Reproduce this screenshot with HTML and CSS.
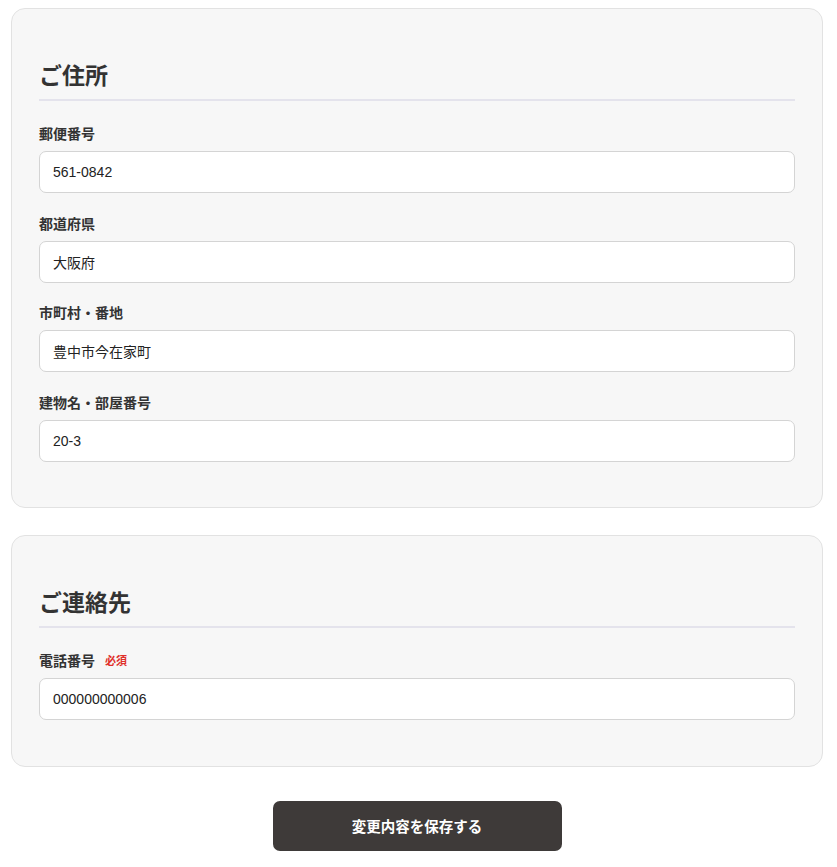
FILE: index.html
```html
<!DOCTYPE html>
<html lang="ja">
<head>
  <meta charset="UTF-8" />
  <meta name="viewport" content="width=device-width, initial-scale=1.0"/>
  <title>会員情報の変更</title>
  <link rel="stylesheet" href="styles.css">
</head>
<body>
  <form class="page" onsubmit="return false;">
    <section class="card">
      <h2>ご住所</h2>
      <div class="field">
        <label for="zip">郵便番号</label>
        <input type="text" id="zip" value="561-0842" />
      </div>
      <div class="field">
        <label for="pref">都道府県</label>
        <input type="text" id="pref" value="大阪府" />
      </div>
      <div class="field">
        <label for="city">市町村・番地</label>
        <input type="text" id="city" value="豊中市今在家町" />
      </div>
      <div class="field">
        <label for="building">建物名・部屋番号</label>
        <input type="text" id="building" value="20-3" />
      </div>
    </section>

    <section class="card">
      <h2>ご連絡先</h2>
      <div class="field">
        <label for="tel">電話番号<span class="required">必須</span></label>
        <input type="text" id="tel" value="000000000006" />
      </div>
    </section>

    <div class="actions">
      <button type="submit">変更内容を保存する</button>
    </div>
  </form>
</body>
</html>
```

FILE: styles.css
```css
body {
  margin: 0;
  padding: 0;
  background: #fff;
  color: #333;
  font-family: "Liberation Sans", Arial, "Noto Sans CJK JP", sans-serif;
}
.page {
  padding: 8px 14px 16px 11px;
  display: flex;
  flex-direction: column;
  gap: 27px;
}
.card {
  background: #f7f7f7;
  border: 1px solid #e2e2e2;
  border-radius: 14px;
  padding: 52px 27px 25px;
}
.card h2 {
  margin: 0 0 23px;
  padding-bottom: 8px;
  border-bottom: 2px solid #e4e3ec;
  font-size: 23px;
  line-height: 30px;
  font-weight: bold;
  color: #333;
}
.field {
  margin-bottom: 20.5px;
}
.field label {
  display: flex;
  align-items: center;
  gap: 10px;
  font-size: 14px;
  line-height: 20px;
  font-weight: bold;
  color: #333;
  margin-bottom: 7px;
}
.required {
  font-size: 11px;
  color: #e0302a;
  font-weight: bold;
}
.field input {
  display: block;
  box-sizing: border-box;
  width: 100%;
  height: 42px;
  padding: 0 13px;
  border: 1px solid #d4d4d4;
  border-radius: 7px;
  background: #fff;
  font-family: "Liberation Sans", Arial, "Noto Sans CJK JP", sans-serif;
  font-size: 14px;
  color: #222;
}
.actions {
  display: flex;
  justify-content: center;
  padding-top: 7px;
}
.actions button {
  width: 289px;
  height: 50px;
  border: none;
  border-radius: 7px;
  background: #3e3a39;
  color: #fff;
  font-family: "Liberation Sans", Arial, "Noto Sans CJK JP", sans-serif;
  font-size: 14.5px;
  font-weight: bold;
  cursor: pointer;
}
```
